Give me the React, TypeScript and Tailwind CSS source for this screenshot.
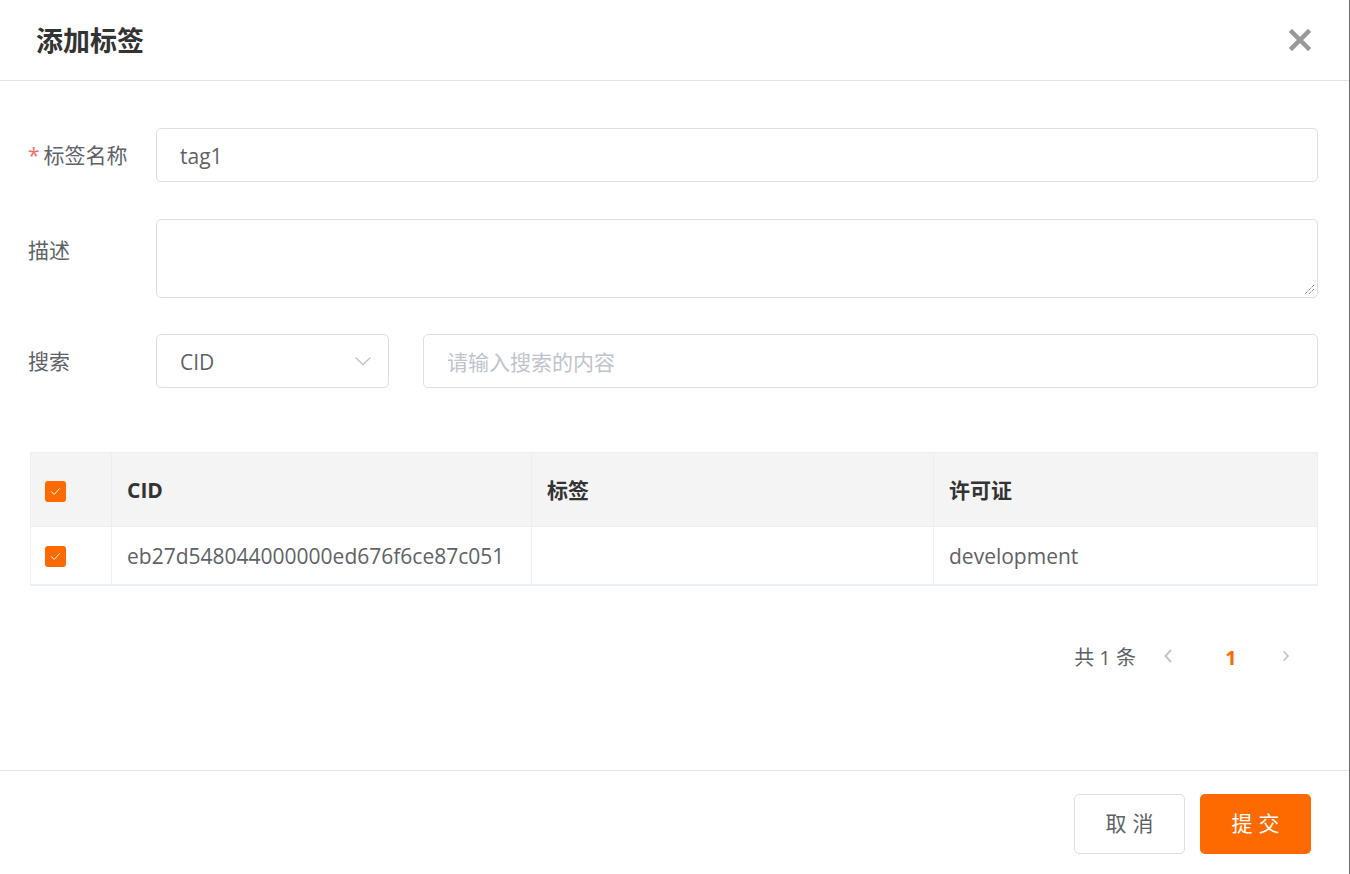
import React from 'react';

const font = { fontFamily: '"Open Sans", "Noto Sans CJK SC", sans-serif' };

const Checkbox: React.FC = () => (
  <span className="flex h-[21px] w-[21px] items-center justify-center rounded-[3px] bg-[#ff6a00]">
    <svg width="13" height="13" viewBox="0 0 13 13" fill="none">
      <path d="M2.5 6.8 L5.3 9.4 L10.5 3.6" stroke="#fff" strokeWidth="1" strokeLinecap="round" strokeLinejoin="round" />
    </svg>
  </span>
);

const App: React.FC = () => {
  return (
    <div className="flex h-[874px] w-[1350px] flex-col bg-white border-r border-[#6b6b6b] text-[21px] text-[#606266]" style={font}>
      {/* Header */}
      <div className="flex h-[81px] shrink-0 items-center justify-between border-b border-[#e4e4e4] pl-[36px] pr-[38px]">
        <h1 className="text-[27px] font-bold text-[#333] leading-none">添加标签</h1>
        <svg width="22" height="22" viewBox="0 0 22 22">
          <path d="M3 3 L19 19 M19 3 L3 19" stroke="#999" strokeWidth="4.5" strokeLinecap="square" />
        </svg>
      </div>

      {/* Body */}
      <div className="flex-1 pl-[28px] pr-[31px] pt-[47px]">
        <div className="flex items-center">
          <label className="w-[128px] shrink-0 leading-[54px]">
            <span className="mr-[4px] text-[#f56c6c]">*</span>标签名称
          </label>
          <div className="flex h-[54px] flex-1 items-center rounded-[5px] border border-[#dcdfe6] px-[23px] pt-[3px] text-[#606266]">tag1</div>
        </div>

        <div className="mt-[37px] flex items-start">
          <label className="w-[128px] shrink-0 pt-[4px] leading-[54px]">描述</label>
          <div className="relative h-[79px] flex-1 rounded-[5px] border border-[#dcdfe6]">
            <svg className="absolute bottom-[2px] right-[2px]" width="12" height="12" viewBox="0 0 12 12">
              <path d="M11 2 L2 11 M11 6 L6 11" stroke="#555" strokeWidth="1" strokeDasharray="1 1" />
            </svg>
          </div>
        </div>

        <div className="mt-[36px] flex items-center">
          <label className="w-[128px] shrink-0 leading-[54px]">搜索</label>
          <div className="flex h-[54px] w-[233px] items-center justify-between rounded-[5px] border border-[#dcdfe6] pl-[23px] pr-[16px]">
            <span className="pt-[3px]">CID</span>
            <svg width="18" height="10" viewBox="0 0 18 10" fill="none">
              <path d="M1.5 1.5 L9 8.5 L16.5 1.5" stroke="#c0c4cc" strokeWidth="1.4" />
            </svg>
          </div>
          <div className="ml-[34px] flex h-[54px] flex-1 items-center rounded-[5px] border border-[#dcdfe6] px-[23px] pt-[3px] text-[#c0c4cc]">
            请输入搜索的内容
          </div>
        </div>

        {/* Table */}
        <div className="ml-[2px] mt-[64px] border border-b-2 border-[#ebeef5]">
          <div className="flex h-[73px] bg-[#f4f4f4] font-bold text-[#333]">
            <div className="flex w-[81px] items-center border-r border-[#ebeef5] pl-[14px] pt-[3px]"><Checkbox /></div>
            <div className="flex w-[420px] items-center border-r border-[#ebeef5] pl-[15px] pt-[3px]">CID</div>
            <div className="flex w-[402px] items-center border-r border-[#ebeef5] pl-[15px] pt-[3px]">标签</div>
            <div className="flex flex-1 items-center pl-[15px] pt-[3px]">许可证</div>
          </div>
          <div className="flex h-[58px] border-t border-[#ebeef5]">
            <div className="flex w-[81px] items-center border-r border-[#ebeef5] pl-[14px] pt-[2px]"><Checkbox /></div>
            <div className="flex w-[420px] items-center border-r border-[#ebeef5] pl-[15px] pt-[3px]">eb27d548044000000ed676f6ce87c051</div>
            <div className="flex w-[402px] items-center border-r border-[#ebeef5] pl-[15px]"></div>
            <div className="flex flex-1 items-center pl-[15px] pt-[3px]">development</div>
          </div>
        </div>

        {/* Pagination */}
        <div className="mt-[50px] flex h-[40px] items-center justify-end pr-[28px] text-[20px]">
          <span className="mr-[20px] pt-[3px]">共 1 条</span>
          <span className="flex w-[24px] justify-center">
            <svg width="10" height="16" viewBox="0 0 10 16" fill="none">
              <path d="M8 2 L2.5 8 L8 14" stroke="#c0c4cc" strokeWidth="2" />
            </svg>
          </span>
          <span className="flex w-[102px] justify-center pt-[3px] font-bold text-[#ff6a00]">1</span>
          <span className="flex w-[8px] justify-center">
            <svg width="10" height="16" viewBox="0 0 10 16" fill="none">
              <path d="M2 2 L7.5 8 L2 14" stroke="#c0c4cc" strokeWidth="2" />
            </svg>
          </span>
        </div>
      </div>

      {/* Footer */}
      <div className="flex h-[104px] shrink-0 items-start justify-end gap-[15px] border-t border-[#e4e4e4] pr-[38px] pt-[23px]">
        <button className="flex h-[60px] w-[111px] items-center justify-center rounded-[5px] border border-[#dcdfe6] bg-white pl-[6px] tracking-[6px] text-[#606266]">
          取消
        </button>
        <button className="flex h-[60px] w-[111px] items-center justify-center rounded-[5px] bg-[#ff6a00] pl-[6px] tracking-[6px] text-white">
          提交
        </button>
      </div>
    </div>
  );
};

export default App;
